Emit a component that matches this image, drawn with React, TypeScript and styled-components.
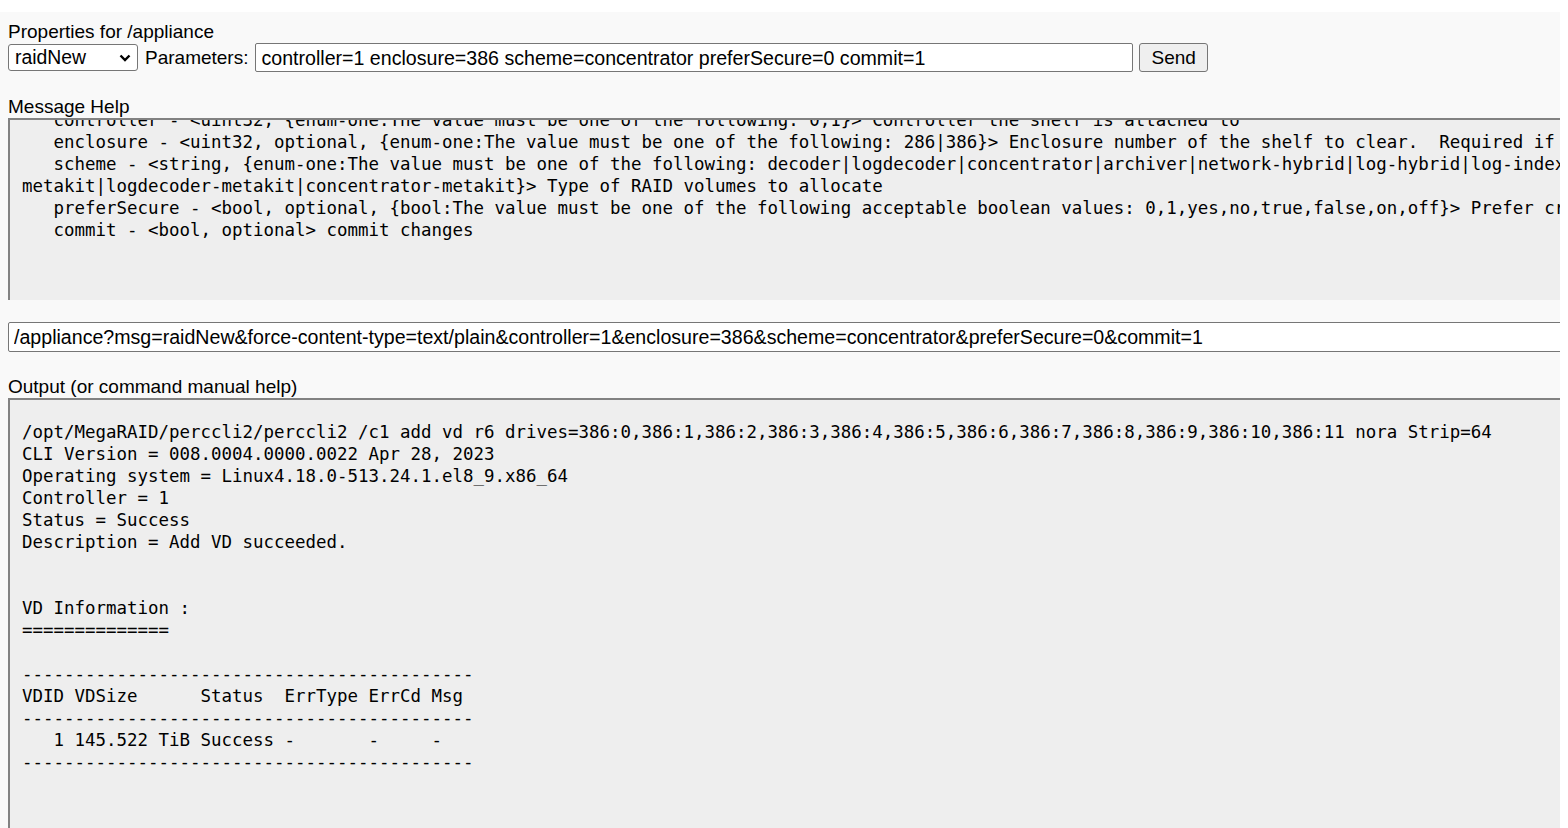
import React from "react";
import styled, { createGlobalStyle } from "styled-components";

const helpLines = [
    "   controller - <uint32, {enum-one:The value must be one of the following: 0,1}> Controller the shelf is attached to",
    "   enclosure - <uint32, optional, {enum-one:The value must be one of the following: 286|386}> Enclosure number of the shelf to clear.  Required if",
    "   scheme - <string, {enum-one:The value must be one of the following: decoder|logdecoder|concentrator|archiver|network-hybrid|log-hybrid|log-index-",
    "metakit|logdecoder-metakit|concentrator-metakit}> Type of RAID volumes to allocate",
    "   preferSecure - <bool, optional, {bool:The value must be one of the following acceptable boolean values: 0,1,yes,no,true,false,on,off}> Prefer cr",
    "   commit - <bool, optional> commit changes",
];

const drives = Array.from({ length: 12 }, (_, i) => `386:${i}`).join(",");
const dashes = "-".repeat(43);

const outputLines = [
    `/opt/MegaRAID/perccli2/perccli2 /c1 add vd r6 drives=${drives} nora Strip=64`,
    "CLI Version = 008.0004.0000.0022 Apr 28, 2023",
    "Operating system = Linux4.18.0-513.24.1.el8_9.x86_64",
    "Controller = 1",
    "Status = Success",
    "Description = Add VD succeeded.",
    "",
    "",
    "VD Information :",
    "==============",
    "",
    dashes,
    "VDID VDSize      Status  ErrType ErrCd Msg",
    dashes,
    "   1 145.522 TiB Success -       -     -",
    dashes,
];

const params =
    "controller=1 enclosure=386 scheme=concentrator preferSecure=0 commit=1";
const url =
    "/appliance?msg=raidNew&force-content-type=text/plain&controller=1&enclosure=386&scheme=concentrator&preferSecure=0&commit=1";

export default function App() {
    return (
        <>
            <GlobalStyle />
            <ScreenStyled>
                <PageStyled>
                    <LabelStyled $top={8}>Properties for /appliance</LabelStyled>
                    <ToolbarStyled>
                        <SelectStyled>
                            <span>raidNew</span>
                            <svg width="12" height="8" viewBox="0 0 12 8">
                                <path
                                    d="M1.5 1.5 L6 6 L10.5 1.5"
                                    fill="none"
                                    stroke="#000"
                                    strokeWidth="2.4"
                                />
                            </svg>
                        </SelectStyled>
                        <InlineLabelStyled>Parameters:</InlineLabelStyled>
                        <TextInputStyled $width={878} readOnly value={params} />
                        <ButtonStyled>Send</ButtonStyled>
                    </ToolbarStyled>
                    <LabelStyled $top={23}>Message Help</LabelStyled>
                    <TextBoxStyled $height={182}>
                        <MonoTextStyled $offset={-11}>{helpLines.join("\n")}</MonoTextStyled>
                    </TextBoxStyled>
                    <UrlRowStyled>
                        <TextInputStyled $width={1600} $height={30} readOnly value={url} />
                    </UrlRowStyled>
                    <LabelStyled $top={23}>Output (or command manual help)</LabelStyled>
                    <TextBoxStyled $height={440}>
                        <MonoTextStyled $offset={21}>{outputLines.join("\n")}</MonoTextStyled>
                    </TextBoxStyled>
                </PageStyled>
            </ScreenStyled>
        </>
    );
}

const GlobalStyle = createGlobalStyle`
    html, body {
        margin: 0;
        padding: 0;
        background: #ffffff;
        overflow: hidden;
    }
`;

const ScreenStyled = styled.div`
    width: 1568px;
    height: 828px;
    padding-top: 12px;
    box-sizing: border-box;
    background: #ffffff;
    overflow: hidden;
`;

const PageStyled = styled.main`
    width: 1560px;
    height: 816px;
    padding-left: 8px;
    box-sizing: border-box;
    background: #f9f9f9;
    overflow: hidden;
    font-family: "Liberation Sans", Arial, sans-serif;
    font-size: 19px;
    color: #000;
`;

const LabelStyled = styled.div<{ $top: number }>`
    margin-top: ${(p) => p.$top}px;
    margin-bottom: 1px;
    line-height: 24px;
    height: 22px;
    white-space: nowrap;
`;

const ToolbarStyled = styled.div`
    display: flex;
    align-items: center;
    gap: 6px;
    height: 29px;
`;

const SelectStyled = styled.div`
    display: flex;
    align-items: center;
    justify-content: space-between;
    width: 130px;
    height: 27px;
    box-sizing: border-box;
    padding: 0 6px 0 6px;
    background: #ffffff;
    border: 1px solid #767676;
    border-radius: 3px;
    line-height: 25px;
    font-size: 19.4px;
`;

const InlineLabelStyled = styled.span`
    padding: 0 1px;
    white-space: nowrap;
`;

const TextInputStyled = styled.input<{ $width: number; $height?: number }>`
    flex: none;
    width: ${(p) => p.$width}px;
    height: ${(p) => p.$height ?? 29}px;
    box-sizing: border-box;
    margin: 0;
    padding: 1px 5px 0;
    border: 1px solid #767676;
    border-radius: 2px;
    background: #ffffff;
    font-family: "Liberation Sans", Arial, sans-serif;
    font-size: 19.6px;
    color: #000;
    outline: none;
`;

const ButtonStyled = styled.button`
    height: 29px;
    margin: 0;
    padding: 0 11px;
    border: 1px solid #767676;
    border-radius: 3px;
    background: #efefef;
    font-family: "Liberation Sans", Arial, sans-serif;
    font-size: 19px;
    color: #000;
`;

const TextBoxStyled = styled.div<{ $height: number }>`
    width: 1600px;
    height: ${(p) => p.$height}px;
    box-sizing: border-box;
    border-top: 2px solid #828282;
    border-left: 2px solid #828282;
    background: #eeeeee;
    overflow: hidden;
`;

const MonoTextStyled = styled.pre<{ $offset: number }>`
    margin: ${(p) => p.$offset}px 0 0 0;
    padding-left: 12px;
    font-family: "DejaVu Sans Mono", "Liberation Mono", monospace;
    font-size: 17.45px;
    line-height: 22px;
    color: #000;
    white-space: pre;
`;

const UrlRowStyled = styled.div`
    margin-top: 22px;
`;
